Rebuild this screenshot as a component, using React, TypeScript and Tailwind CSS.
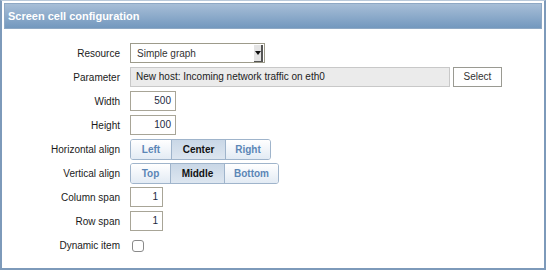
import React from 'react';

const LABEL = 'w-[120px] shrink-0 text-right pr-[1px] text-[#1a1a1a]';

const Row = ({ label, children }: { label: string; children: React.ReactNode }) => (
  <div className="flex items-center h-[24px]">
    <div className={LABEL}>{label}</div>
    <div className="ml-[9px] flex items-center">{children}</div>
  </div>
);

const NumInput = ({ value, w }: { value: string; w: string }) => (
  <div className={`${w} h-[20px] border border-[#a8a597] bg-white text-right pr-[4px] leading-[18px] text-[#1d2a3f]`}>
    {value}
  </div>
);

const Segmented = ({ items, active, widths }: { items: string[]; active: string; widths: string[] }) => (
  <div className="flex h-[21px] rounded-[3px] border border-[#9fb4cb] overflow-hidden">
    {items.map((it, i) => (
      <div
        key={it}
        className={`${widths[i]} flex items-center justify-center font-bold ${i > 0 ? 'border-l border-[#9fb4cb]' : ''} ${
          it === active
            ? 'bg-gradient-to-b from-[#c9d7e6] to-[#dde6f0] text-[#111]'
            : 'bg-gradient-to-b from-[#ffffff] to-[#e3ebf4] text-[#5b86b6]'
        }`}
      >
        {it}
      </div>
    ))}
  </div>
);

export default function App() {
  return (
    <div
      className="w-[547px] h-[271px] bg-white text-[10px]"
      style={{ fontFamily: '"Liberation Sans", Arial, sans-serif' }}
    >
      <div className="w-[546px] h-[270px] border-2 border-[#7d9aba] border-t-[#b9c9da] border-t pt-[2px] px-[2px]">
        <div className="h-[26px] bg-gradient-to-b from-[#a7bed7] to-[#7398be] border border-[#8ea8c4] flex items-center pl-[3px]">
          <span className="text-white font-bold text-[11px]">Screen cell configuration</span>
        </div>
        <div className="pt-[12px] -ml-[3px]">
          <Row label="Resource">
            <div className="w-[135px] h-[20px] border border-[#9d9b8b] bg-white flex items-center justify-between pl-[6px] text-[#333]">
              <span>Simple graph</span>
              <div className="w-[9px] h-[17px] mr-[1px] bg-[#e4e4e4] border-r-2 border-b border-[#555] flex items-center justify-center">
                <div className="w-0 h-0 border-l-[3px] border-r-[3px] border-t-[4px] border-l-transparent border-r-transparent border-t-[#111]" />
              </div>
            </div>
          </Row>
          <Row label="Parameter">
            <div className="w-[320px] h-[20px] border border-[#c8c8c8] bg-[#ebebeb] pl-[5px] leading-[18px] text-[#222]">
              New host: Incoming network traffic on eth0
            </div>
            <div className="ml-[3px] w-[49px] h-[20px] border border-[#9a9a92] bg-white text-center leading-[18px] text-[#333]">
              Select
            </div>
          </Row>
          <Row label="Width">
            <NumInput value="500" w="w-[46px]" />
          </Row>
          <Row label="Height">
            <NumInput value="100" w="w-[46px]" />
          </Row>
          <Row label="Horizontal align">
            <Segmented items={['Left', 'Center', 'Right']} active="Center" widths={['w-[40px]', 'w-[54px]', 'w-[45px]']} />
          </Row>
          <Row label="Vertical align">
            <Segmented items={['Top', 'Middle', 'Bottom']} active="Middle" widths={['w-[39px]', 'w-[54px]', 'w-[54px]']} />
          </Row>
          <Row label="Column span">
            <NumInput value="1" w="w-[33px]" />
          </Row>
          <Row label="Row span">
            <NumInput value="1" w="w-[33px]" />
          </Row>
          <Row label="Dynamic item">
            <div className="ml-[2px] mt-[1px] w-[12px] h-[12px] rounded-[3px] border border-[#8a8a8a] bg-white" />
          </Row>
        </div>
      </div>
    </div>
  );
}
